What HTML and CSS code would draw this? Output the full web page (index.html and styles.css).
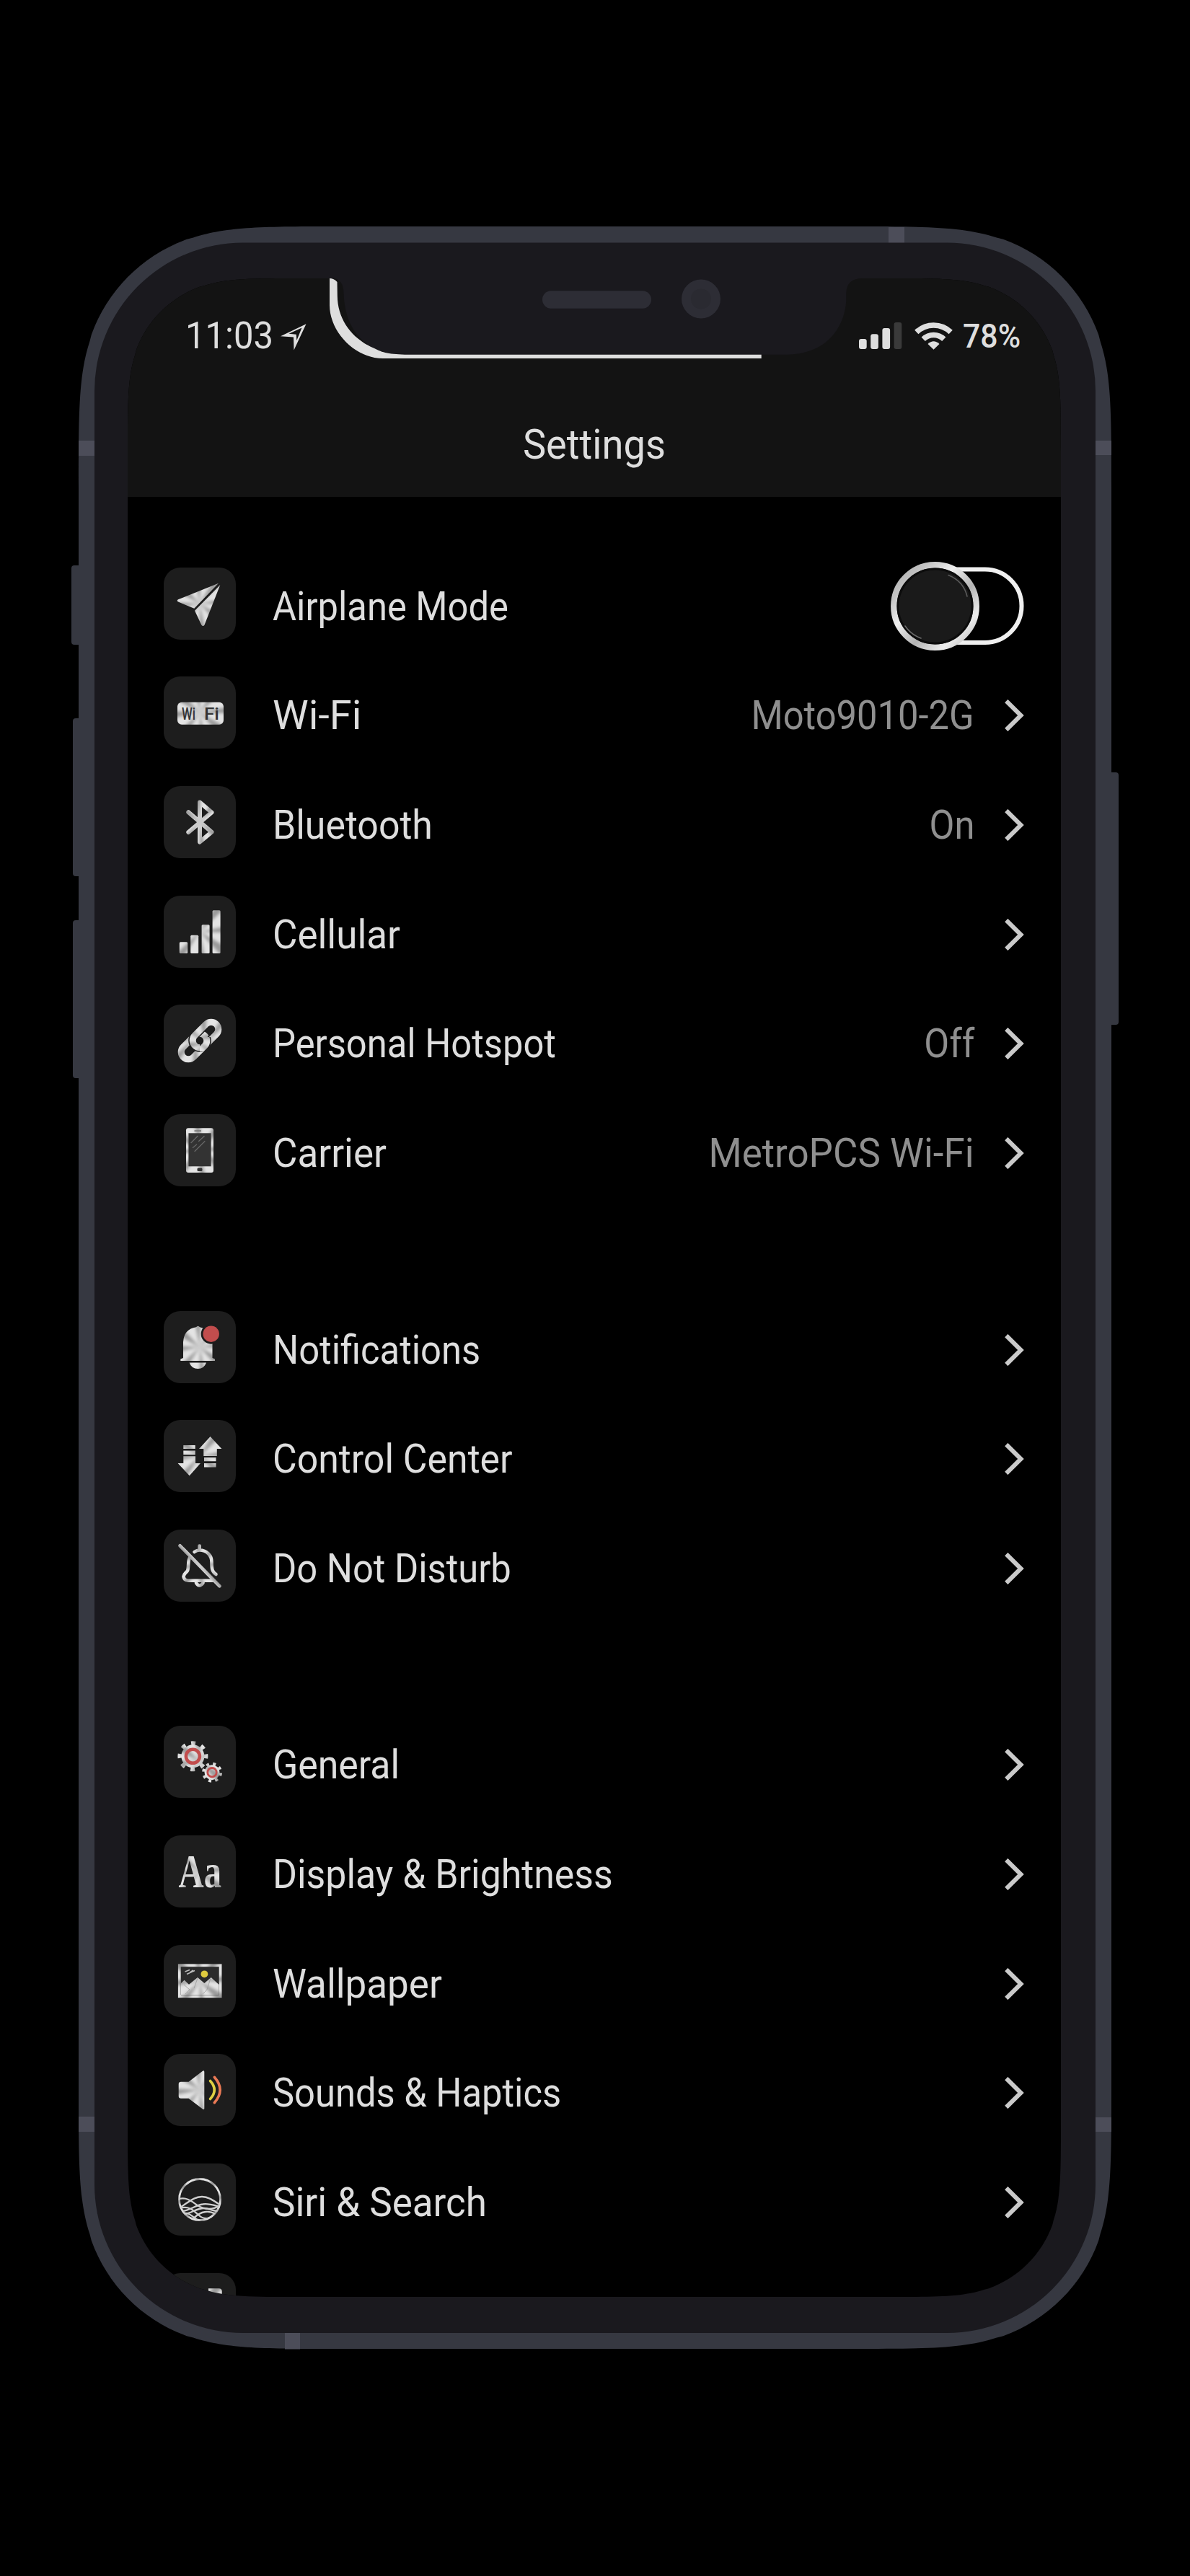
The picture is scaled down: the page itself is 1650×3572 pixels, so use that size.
FILE: index.html
```
<!DOCTYPE html>
<html lang="en">
  <head>
    <meta charset="UTF-8" />
    <meta name="viewport" content="width=device-width, initial-scale=1.0" />
    <title>Settings</title>
    <link rel="stylesheet" href="styles.css">
  </head>
  <body>
    <!-- shared fills and symbols -->
    <svg class="defs" width="0" height="0">
      <defs>
        <pattern id="metal" patternUnits="userSpaceOnUse" width="100" height="100">
          <rect width="100" height="100" fill="#e4e4e4" />
          <g fill="#999" filter="url(#soft)">
            <polygon points="50,50 130,34 130,52" />
            <polygon points="50,50 120,90 106,112" />
            <polygon points="50,50 66,130 50,130" />
            <polygon points="50,50 6,118 -8,104" />
            <polygon points="50,50 -30,66 -30,46" />
            <polygon points="50,50 -20,12 -6,-10" />
            <polygon points="50,50 34,-30 52,-30" />
            <polygon points="50,50 92,-20 110,-6" />
          </g>
        </pattern>
        <filter id="soft" x="-50%" y="-50%" width="200%" height="200%">
          <feGaussianBlur stdDeviation="2.2" />
        </filter>
        <linearGradient id="ring" x1="0" y1="0" x2="1" y2="1">
          <stop offset="0" stop-color="#a9a9a9" />
          <stop offset="0.2" stop-color="#c4c4c4" />
          <stop offset="0.38" stop-color="#efefef" />
          <stop offset="0.6" stop-color="#b4b4b4" />
          <stop offset="0.8" stop-color="#ececec" />
          <stop offset="1" stop-color="#b0b0b0" />
        </linearGradient>
        <clipPath id="siri-clip"><circle cx="50" cy="50" r="29" /></clipPath>
        <clipPath id="link-clip"><rect x="50" y="45" width="20" height="20" /></clipPath>
        <symbol id="chevron" viewBox="0 0 27 44">
          <path d="M2.3 2 L22.5 22 L2.3 42" fill="none" stroke="#cacaca" stroke-width="6" />
        </symbol>
      </defs>
    </svg>

    <div class="phone">
      <svg class="frame" viewBox="0 0 1432 2943">
        <g fill="#363841">
          <rect x="-10" y="470" width="30" height="110" rx="4" />
          <rect x="-8" y="682" width="30" height="219" rx="4" />
          <rect x="-8" y="962" width="30" height="219" rx="4" />
          <rect x="1412" y="757" width="30" height="350" rx="4" />
          <path d="M362 0 H1070 C1174 0 1226 0 1273 15.5 L1282 17.8 C1343.6 40 1392 88.4 1414.2 150 L1416.5 159 C1432 206 1432 258 1432 362 V2581 C1432 2685 1432 2737 1416.5 2784 L1414.2 2793 C1392 2854.6 1343.6 2903 1282 2925.2 L1273 2927.5 C1226 2943 1174 2943 1070 2943 H362 C258 2943 206 2943 159 2927.5 L150 2925.2 C88.4 2903 40 2854.6 17.8 2793 L15.5 2784 C0 2737 0 2685 0 2581 V362 C0 258 0 206 15.5 159 L17.8 150 C40 88.4 88.4 40 150 17.8 L159 15.5 C206 0 258 0 362 0Z" />
        </g>
        <g fill="#4c4d59">
          <rect x="0" y="297" width="24" height="21" />
          <rect x="1408" y="297" width="24" height="20" />
          <rect x="0" y="2621" width="24" height="21" />
          <rect x="1408" y="2622" width="24" height="20" />
          <rect x="1123" y="1" width="22" height="24" />
          <rect x="286" y="2919" width="21" height="24.5" />
        </g>
        <rect x="22" y="22.5" width="1388" height="2898.5" rx="206" fill="#1a191e" />
      </svg>

      <main class="screen">
        <header class="header">
          <div class="status-bar">
            <div class="status-left">
              <span class="time">11:03</span>
              <svg class="location" viewBox="0 0 36 37">
                <path fill="#dedede" fill-rule="evenodd" d="M0 17.3 L35.5 0.3 L18.5 36.5 L18 18.6Z M29.5 5.5 L11.5 13.8 L21.8 14.8 L22.4 23Z" />
              </svg>
            </div>
            <div class="status-right">
              <svg class="signal" viewBox="0 0 60 38">
                <rect x="0" y="23" width="10.7" height="14" rx="3" fill="#dedede" />
                <rect x="16.2" y="16.3" width="10.7" height="20.7" rx="3" fill="#dedede" />
                <rect x="32.4" y="8" width="10.7" height="29" rx="3" fill="#dedede" />
                <rect x="48.6" y="0" width="10.7" height="37" rx="3" fill="#3a3a3a" />
              </svg>
              <svg class="wifi" viewBox="0 0 53 39">
                <g fill="none" stroke="#dedede" stroke-width="7.5">
                  <path d="M2.8 14.5 A34 34 0 0 1 50.2 14.5" />
                  <path d="M12.2 24.2 A20.5 20.5 0 0 1 40.8 24.2" />
                </g>
                <path d="M18.5 31 Q26.5 23.5 34.5 31 L26.5 38.8Z" fill="#dedede" />
              </svg>
              <span class="battery">78%</span>
            </div>
          </div>
          <h1 class="title"><span>Settings</span></h1>
        </header>

        <svg class="notch" viewBox="277 0 750 112">
          <path d="M286 0 Q299 2 299.5 20 C301 72 330 105.7 383 105.7 H913 C966 105.7 993 72 996.3 32 V20 Q997 0 1019 0Z" fill="#1a191e" />
          <path d="M280 0 V37 C280 74 315 111 354 111 H878.7 V105.7 H389 C363 105.5 353 103 342 97 C311 84 291 57 290.8 24 L290.5 5 Q286 0 280 0Z" fill="#dedede" />
          <rect x="575" y="17.3" width="151" height="24.5" rx="12.2" fill="#2d2d35" />
          <circle cx="795" cy="28.5" r="27" fill="#2d2d35" />
          <circle cx="795" cy="28.5" r="14" fill="#2a2a31" />
        </svg>

        <div class="list">
          <section class="group">
            <div class="row">
              <svg class="icon" viewBox="0 0 100 100" fill="url(#metal)">
                <path d="M20 44.3 L76 21.8 L42.3 56.8 L20 47.5 Q17.5 46 20 44.3Z" />
                <path d="M78.3 24 L43 59.8 L52.3 79.5 Q54.5 82.5 56.5 79.5Z" />
              </svg>
              <div class="content">
                <span class="label">Airplane Mode</span>
                <svg class="toggle" viewBox="0 0 185 123">
                  <rect x="22" y="10.5" width="159.5" height="101.5" rx="50.7" fill="#000" stroke="#f0f0f0" stroke-width="6" />
                  <circle cx="61.5" cy="61.5" r="57.2" fill="#1a1a1a" stroke="url(#ring)" stroke-width="8.5" />
                  <circle cx="61.5" cy="61.5" r="51.5" fill="none" stroke="#0c0c0c" stroke-width="3" />
                  <path d="M80 18.5 Q101 27 106 48" fill="none" stroke="#5a5a5a" stroke-width="1.6" stroke-linecap="round" />
                  <path d="M20 89 Q28 101 42 106" fill="none" stroke="#6a6a6a" stroke-width="1.6" stroke-linecap="round" />
                </svg>
              </div>
            </div>
            <div class="row">
              <svg class="icon" viewBox="0 0 100 100">
                <rect x="19" y="35.7" width="64" height="31" rx="6" fill="url(#metal)" />
                <text class="wifi-text" x="25" y="60" textLength="19" lengthAdjust="spacingAndGlyphs">Wi</text>
                <text class="wifi-text" x="56" y="60" textLength="21" lengthAdjust="spacingAndGlyphs">Fi</text>
              </svg>
              <div class="content">
                <span class="label widest">Wi-Fi</span>
                <span class="value">Moto9010-2G</span>
                <svg class="chevron"><use href="#chevron" /></svg>
              </div>
            </div>
            <div class="row">
              <svg class="icon" viewBox="0 0 100 100">
                <path d="M34.3 36.3 L66.5 63.7 L50 77.5 V22.5 L66.5 36.5 L34.3 64" fill="none" stroke="url(#metal)" stroke-width="6" stroke-linecap="round" stroke-linejoin="round" />
              </svg>
              <div class="content">
                <span class="label wide">Bluetooth</span>
                <span class="value">On</span>
                <svg class="chevron"><use href="#chevron" /></svg>
              </div>
            </div>
            <div class="row">
              <svg class="icon" viewBox="0 0 100 100" fill="url(#metal)">
                <rect x="21.8" y="64.3" width="11.4" height="15.7" rx="1.5" />
                <rect x="37.2" y="54.7" width="11" height="25.3" rx="1.5" />
                <rect x="52.6" y="40.3" width="11" height="39.7" rx="1.5" />
                <rect x="67.6" y="20.3" width="11" height="59.7" rx="1.5" />
              </svg>
              <div class="content">
                <span class="label wider">Cellular</span>
                <svg class="chevron"><use href="#chevron" /></svg>
              </div>
            </div>
            <div class="row">
              <svg class="icon" viewBox="0 0 100 100" fill="none" stroke="url(#metal)" stroke-width="9">
                <rect x="21" y="48" width="42" height="20" rx="10" transform="rotate(-45 42 58)" />
                <rect x="37" y="32" width="42" height="20" rx="10" transform="rotate(-45 58 42)" stroke="#1d1d1d" stroke-width="12" />
                <rect x="37" y="32" width="42" height="20" rx="10" transform="rotate(-45 58 42)" />
                <g clip-path="url(#link-clip)">
                  <rect x="21" y="48" width="42" height="20" rx="10" transform="rotate(-45 42 58)" stroke="#1d1d1d" stroke-width="12" />
                  <rect x="21" y="48" width="42" height="20" rx="10" transform="rotate(-45 42 58)" />
                </g>
              </svg>
              <div class="content">
                <span class="label">Personal Hotspot</span>
                <span class="value">Off</span>
                <svg class="chevron"><use href="#chevron" /></svg>
              </div>
            </div>
            <div class="row">
              <svg class="icon" viewBox="0 0 100 100">
                <rect x="31" y="19.3" width="38" height="61.7" rx="3" fill="url(#metal)" />
                <rect x="34.4" y="26.3" width="31.2" height="46" fill="#333" />
                <rect x="46.5" y="74.5" width="7" height="4.4" rx="1.5" fill="#333" />
                <path d="M42.5 23.2 H52" stroke="#777" stroke-width="1.8" />
                <path d="M37.6 40 L47.4 30 M48.2 37.7 L56.5 30.3 M40 46.7 L46 41.7 M42.7 51.7 L57.3 37.3" stroke="#686868" stroke-width="1.3" />
              </svg>
              <div class="content">
                <span class="label wider">Carrier</span>
                <span class="value wider">MetroPCS Wi-Fi</span>
                <svg class="chevron"><use href="#chevron" /></svg>
              </div>
            </div>
          </section>

          <section class="group">
            <div class="row">
              <svg class="icon" viewBox="0 0 100 100" fill="url(#metal)">
                <path d="M27 65 V43 Q28 25 45 22.3 Q47.5 19 50 22.3 Q67 26 67.5 43 V65 L71 66.5 V69 H23.3 V66.5Z" />
                <path d="M35.5 71.5 H59 Q56 80 47.5 80 Q38.5 80 35.5 71.5Z" />
                <circle cx="65.7" cy="31.7" r="14" fill="#1d1d1d" />
                <circle cx="65.7" cy="31.7" r="11.2" fill="#c24d4d" />
              </svg>
              <div class="content">
                <span class="label">Notifications</span>
                <svg class="chevron"><use href="#chevron" /></svg>
              </div>
            </div>
            <div class="row">
              <svg class="icon" viewBox="0 0 100 100" fill="url(#metal)">
                <path d="M27.3 35 H43.7 V40 H27.3Z M27.3 42.5 H43.7 V48.3 H27.3Z M27.3 50.3 H44 V60 H51 L35.7 77.3 L19.6 60 H27.3Z" />
                <path d="M64.6 23 L80.4 40 H73.8 V50 H55.3 V40 H49Z M56 52 H72.5 V57.3 H56Z M56 60 H72.5 V65.5 H56Z" />
              </svg>
              <div class="content">
                <span class="label wide">Control Center</span>
                <svg class="chevron"><use href="#chevron" /></svg>
              </div>
            </div>
            <div class="row">
              <svg class="icon" viewBox="0 0 100 100" fill="none" stroke="url(#metal)" stroke-width="4.6" stroke-linecap="round" stroke-linejoin="round">
                <path d="M22.5 22.3 L77.5 78.3" />
                <path d="M42.5 31 Q46 28.5 49.6 28.5 V22.5 M49.6 28.5 C60 28.5 66.5 36 66.5 45 C66.5 55 67.5 59 72.5 62" />
                <path d="M36.5 38 C33 43 35 52 33 57 C31 60 28 61 27.5 65 C28 69 31 70.5 34 70.8 H68" />
                <path d="M45 74 Q49.6 81 54.5 74" />
              </svg>
              <div class="content">
                <span class="label">Do Not Disturb</span>
                <svg class="chevron"><use href="#chevron" /></svg>
              </div>
            </div>
          </section>

          <section class="group">
            <div class="row">
              <svg class="icon" viewBox="0 0 100 100">
                <g transform="rotate(-9 40.4 42.3)">
                  <circle cx="40.4" cy="42.3" r="18" fill="none" stroke="url(#metal)" stroke-width="6" stroke-dasharray="5.8 8.34" />
                </g>
                <circle cx="40.4" cy="42.3" r="16" fill="url(#metal)" />
                <circle cx="40.4" cy="42.3" r="9.5" fill="none" stroke="#c24d4d" stroke-width="4.6" />
                <g transform="rotate(4 67 64.7)">
                  <circle cx="67" cy="64.7" r="12" fill="none" stroke="url(#metal)" stroke-width="4" stroke-dasharray="4 5.425" />
                </g>
                <circle cx="67" cy="64.7" r="10.5" fill="url(#metal)" />
                <circle cx="67" cy="64.7" r="6.2" fill="none" stroke="#c24d4d" stroke-width="2.8" />
              </svg>
              <div class="content">
                <span class="label wide">General</span>
                <svg class="chevron"><use href="#chevron" /></svg>
              </div>
            </div>
            <div class="row">
              <svg class="icon" viewBox="0 0 100 100">
                <text class="aa-text" x="20.5" y="72" textLength="59.5" lengthAdjust="spacingAndGlyphs">Aa</text>
              </svg>
              <div class="content">
                <span class="label wide">Display &amp; Brightness</span>
                <svg class="chevron"><use href="#chevron" /></svg>
              </div>
            </div>
            <div class="row">
              <svg class="icon" viewBox="0 0 100 100">
                <rect x="21.8" y="28.3" width="56.8" height="43" fill="#2b2b2b" stroke="url(#metal)" stroke-width="3.8" />
                <path d="M24 53 L28.6 48.7 L35 54.7 L47 45 L56.4 53 L65.7 45 L76.6 55 V69 H24Z" fill="url(#metal)" />
                <path d="M28 55 L36 62 L30 68 M47 46 L42 60 M65 46 L60 62 L54 68" fill="none" stroke="#9a9a9a" stroke-width="0.8" />
                <circle cx="56.4" cy="40.3" r="4.9" fill="#dfcb3f" />
                <path d="M29.5 37 L36 34.5 M32 40.5 L43 35.5 M37 37.5 L41 35" stroke="#bdbdbd" stroke-width="1.5" />
              </svg>
              <div class="content">
                <span class="label wider">Wallpaper</span>
                <svg class="chevron"><use href="#chevron" /></svg>
              </div>
            </div>
            <div class="row">
              <svg class="icon" viewBox="0 0 100 100">
                <path d="M24 38.7 H34.5 L54 23.8 Q56.3 22.5 56.3 25 V75.5 Q56.3 78 54 76.5 L34.5 61.7 H24 Q20.7 61.7 20.7 58.5 V42 Q20.7 38.7 24 38.7Z" fill="url(#metal)" />
                <g fill="none" stroke-width="3.6" stroke-linecap="round">
                  <path d="M64.5 37.5 Q76 50 64.5 62.5" stroke="#dfd043" />
                  <path d="M70.3 32.3 Q86 50 70.3 67.7" stroke="#ea7a55" />
                </g>
              </svg>
              <div class="content">
                <span class="label">Sounds &amp; Haptics</span>
                <svg class="chevron"><use href="#chevron" /></svg>
              </div>
            </div>
            <div class="row">
              <svg class="icon" viewBox="0 0 100 100" fill="none" stroke="#cfcfcf" stroke-width="2.3">
                <circle cx="50" cy="50" r="28.5" stroke="url(#metal)" stroke-width="2.8" />
                <g clip-path="url(#siri-clip)">
                  <path d="M20 49.5 C34 45 42 56 50 60 S68 65 80 57" />
                  <path d="M24 60 C34 54 42 46 53 46 C62 46 70 52 79 58" />
                  <path d="M22 62 C36 58 42 66 49 72 S62 77 72 72" />
                  <path d="M26 66 C36 65 44 58 54 56.5 C62 55 70 58 78 60" />
                  <path d="M30 70 C40 68 46 62 56 62 C62 62 68 66 76 66" />
                  <path d="M40 77 C46 72 50 68 58 67 C64 66 68 68 72 70" />
                  <path d="M26 70 C34 66 40 74 48 79" />
                </g>
              </svg>
              <div class="content">
                <span class="label wider">Siri &amp; Search</span>
                <svg class="chevron"><use href="#chevron" /></svg>
              </div>
            </div>
            <!-- next row, scrolled under the bottom edge -->
            <div class="row">
              <svg class="icon" viewBox="0 0 100 100">
                <path d="M62 21.3 H76.5 Q80.7 21.3 80.7 25.5 V40 H62Z" fill="url(#metal)" />
              </svg>
            </div>
          </section>
        </div>
      </main>
    </div>
  </body>
</html>
```
FILE: styles.css
```
* {
  margin: 0;
  padding: 0;
  box-sizing: border-box;
}

body {
  background-color: #000;
  color: #dedede;
  font-family: Roboto, "Liberation Sans", sans-serif;
  padding: 314px 109px;
  height: 3572px;
  overflow: hidden;
}

svg {
  display: block;
  flex-shrink: 0;
}

.defs {
  position: absolute;
}

.phone {
  position: relative;
  width: 1432px;
  height: 2943px;
  padding: 72px 70px 72px 68px;
}

/* phone body sits behind the screen */
.frame {
  position: absolute;
  top: 0;
  left: 0;
  width: 1432px;
  height: 2943px;
  overflow: visible;
}

.screen {
  position: relative;
  width: 1294px;
  height: 2799px;
  background-color: #000;
  overflow: hidden;
  clip-path: path("M241.5 0 H1052.5 C1122 0 1157 0 1188.1 10.3 L1194.2 11.8 C1235.1 26.7 1267.3 58.9 1282.2 99.8 L1283.7 105.9 C1294 137 1294 172 1294 241.5 V2557.5 C1294 2627 1294 2662 1283.7 2693.1 L1282.2 2699.2 C1267.3 2740.1 1235.1 2772.3 1194.2 2787.2 L1188.1 2788.7 C1157 2799 1122 2799 1052.5 2799 H241.5 C172 2799 137 2799 105.9 2788.7 L99.8 2787.2 C58.9 2772.3 26.7 2740.1 11.8 2699.2 L10.3 2693.1 C0 2662 0 2627 0 2557.5 V241.5 C0 172 0 137 10.3 105.9 L11.8 99.8 C26.7 58.9 58.9 26.7 99.8 11.8 L105.9 10.3 C137 0 172 0 241.5 0Z");
}

.header {
  height: 303px;
  background-color: #131313;
}

.status-bar {
  height: 159px;
  padding: 0 56px 0 80px;
  display: flex;
  justify-content: space-between;
  align-items: center;
}

.status-left,
.status-right {
  display: flex;
  align-items: center;
}

.time {
  font-size: 51px;
  transform: scaleX(0.96);
  transform-origin: left;
}

.location {
  width: 36px;
  height: 37px;
  margin-left: 5px;
  margin-top: 4px;
}

.signal {
  width: 60px;
  height: 38px;
}

.wifi {
  width: 53px;
  height: 39px;
  margin-left: 17px;
}

.battery {
  font-size: 46px;
  font-weight: 500;
  margin-left: 8px;
  transform: scaleX(0.93);
  transform-origin: right;
}

.title {
  height: 141px;
  display: flex;
  justify-content: center;
  align-items: center;
  font-size: 58px;
  font-weight: 400;
}

.title span {
  transform: scaleX(0.935);
}

.notch {
  position: absolute;
  top: 0;
  left: 277px;
  width: 750px;
  height: 112px;
}

.list {
  padding: 71.8px 51px 0 50px;
  display: flex;
  flex-direction: column;
  gap: 120.8px;
}

.row {
  height: 151.7px;
  display: flex;
  align-items: center;
  gap: 51px;
}

.icon {
  width: 100px;
  height: 100px;
  border-radius: 23px;
  background-color: #1d1d1d;
}

.content {
  flex: 1;
  height: 100%;
  padding-top: 8px;
  display: flex;
  align-items: center;
}

.label,
.value {
  font-size: 56px;
  white-space: nowrap;
  transform: scaleX(0.905);
}

.label {
  flex: 1;
  transform-origin: left;
}

.value {
  color: #8f8f8f;
  transform-origin: right;
}

.wide {
  transform: scaleX(0.925);
}

.wider {
  transform: scaleX(0.945);
}

.widest {
  transform: scaleX(1);
}

.chevron {
  width: 27px;
  height: 44px;
  margin-left: 42px;
}

.toggle {
  width: 185px;
  height: 123px;
}

.wifi-text {
  font-size: 23px;
  font-weight: 500;
  fill: #333;
}

.aa-text {
  font-family: "Liberation Serif", serif;
  font-size: 66px;
  font-weight: bold;
  fill: url(#metal);
}
```
